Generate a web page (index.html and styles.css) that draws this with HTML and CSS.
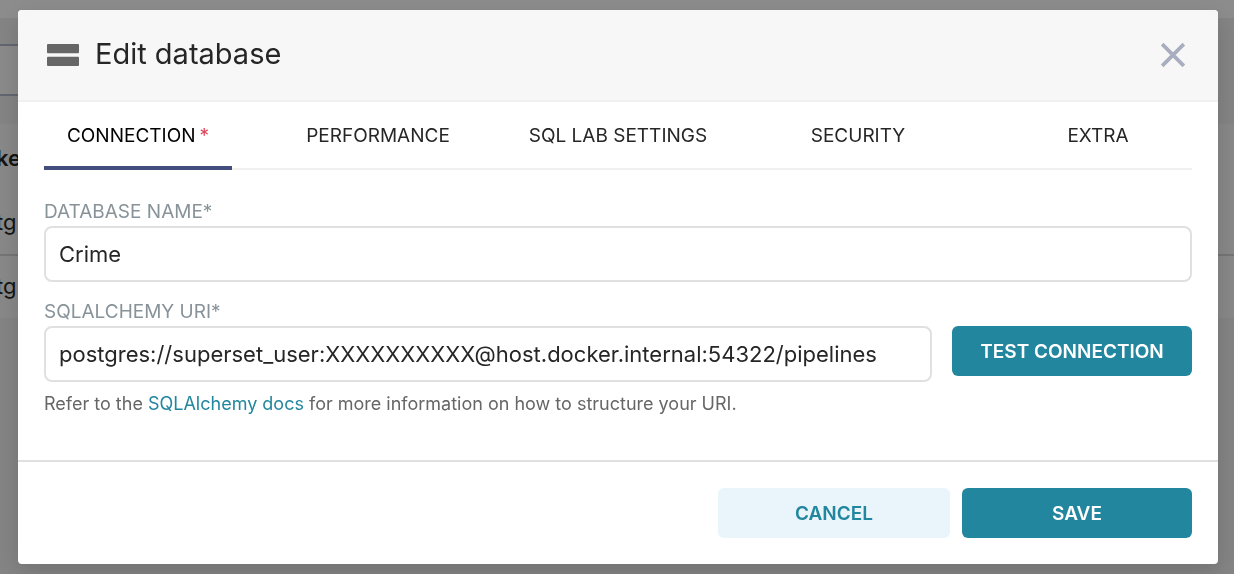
FILE: index.html
```html
<!DOCTYPE html>
<html lang="en">
<head>
<meta charset="utf-8">
<title>Edit database</title>
<link rel="stylesheet" href="styles.css">
</head>
<body>
<div class="page" aria-hidden="true">
  <div class="page-top"></div>
  <div class="filters"><div class="filter-box"></div></div>
  <div class="list">
    <div class="list-head">ke</div>
    <div class="list-row">tg</div>
    <div class="list-row">tg</div>
  </div>
</div>
<div class="overlay">
  <section class="modal" role="dialog" aria-modal="true" aria-labelledby="title">
    <header class="modal-header">
      <svg class="db-icon" viewBox="0 0 32 22" aria-hidden="true"><rect width="32" height="9.3" y="0" rx="1"/><rect width="32" height="9.3" y="12.7" rx="1"/></svg>
      <h1 class="title" id="title">Edit database</h1>
      <button class="close" type="button" aria-label="Close"><svg viewBox="0 0 24 24" aria-hidden="true"><path d="M2 2 22 22M22 2 2 22"/></svg></button>
    </header>
    <div class="modal-body">
      <nav class="tabs" role="tablist">
        <button class="tab tab-active" type="button" role="tab" aria-selected="true">CONNECTION<span class="required">*</span></button>
        <button class="tab" type="button" role="tab" aria-selected="false">PERFORMANCE</button>
        <button class="tab" type="button" role="tab" aria-selected="false">SQL LAB SETTINGS</button>
        <button class="tab" type="button" role="tab" aria-selected="false">SECURITY</button>
        <button class="tab" type="button" role="tab" aria-selected="false">EXTRA</button>
      </nav>
      <div class="field">
        <label class="label" for="name">DATABASE NAME*</label>
        <input class="input" id="name" type="text" value="Crime">
      </div>
      <div class="field">
        <label class="label" for="uri">SQLALCHEMY URI*</label>
        <div class="uri-row">
          <input class="input" id="uri" type="text" value="postgres://superset_user:XXXXXXXXXX@host.docker.internal:54322/pipelines">
          <button class="btn btn-primary btn-test" type="button">TEST CONNECTION</button>
        </div>
        <p class="help">Refer to the <a class="link" href="#docs">SQLAlchemy docs</a> for more information on how to structure your URI.</p>
      </div>
    </div>
    <footer class="modal-footer">
      <button class="btn btn-secondary" type="button">CANCEL</button>
      <button class="btn btn-primary" type="button">SAVE</button>
    </footer>
  </section>
</div>
</body>
</html>
```
FILE: styles.css
```css
* { box-sizing: border-box; }
body {
  margin: 0;
  min-height: 100vh;
  overflow: hidden;
  background: #f0f0f0;
  color: #262626;
  font-family: Inter, "Liberation Sans", sans-serif;
}
button, input { font: inherit; color: inherit; }

.page-top { height: 18px; background: #fff; }
.filters { padding: 26px 0 28px; }
.filter-box {
  width: 50%;
  height: 52px;
  border: solid #b4b9cc;
  border-width: 2px 0;
  background: #fbfbfb;
}
.list { background: #f7f7f7; font-size: 22px; text-indent: -4px; }
.list-head { padding-top: 2px; line-height: 64px; font-weight: 600; }
.list-row { line-height: 64px; }
.list-row + .list-row { padding-bottom: 2px; border-top: 2px solid #d5d5d5; line-height: 60px; }

.overlay {
  position: fixed;
  inset: 0;
  padding: 10px 16px 10px 18px;
  background: rgba(0, 0, 0, .45);
}
.modal {
  display: flex;
  flex-direction: column;
  min-height: 100%;
  overflow: hidden;
  border-radius: 4px;
  background: #fff;
  box-shadow: 0 8px 24px rgba(0, 0, 0, .15);
}
.modal-header {
  display: flex;
  align-items: center;
  gap: 16px;
  padding: 23px 32px 23px 29px;
  border-bottom: 2px solid #f0f0f0;
  background: #f7f7f7;
}
.db-icon { width: 32px; height: 22px; fill: #666; }
.title {
  margin: 0;
  padding-bottom: 2px;
  font-size: 29px;
  line-height: 42px;
  font-weight: 400;
}
.close {
  display: flex;
  margin-left: auto;
  padding: 0;
  border: 0;
  background: none;
}
.close svg { width: 26px; height: 26px; fill: none; stroke: #a8adbf; stroke-width: 3.4; }

.modal-body { flex: 1; padding: 0 26px; }
.tabs {
  display: grid;
  grid-template-columns: repeat(5, 1fr);
  gap: 52px;
  margin-bottom: 30px;
  box-shadow: inset 0 -2px #f0f0f0;
}
.tab {
  padding: 4px 0 0;
  border: 0;
  border-bottom: 4px solid transparent;
  background: none;
  font-size: 19px;
  line-height: 60px;
  white-space: nowrap;
}
.tab-active { border-color: #444e7c; color: #000; }
.required { margin-left: 4px; color: #e04355; }

.field { margin-bottom: 18px; }
.label { display: block; padding-bottom: 2px; color: #879399; font-size: 19px; line-height: 24px; }
.input {
  display: block;
  width: 100%;
  height: 56px;
  padding: 0 13px;
  border: 2px solid #e0e0e0;
  border-radius: 8px;
  background: #fff;
  font-size: 22px;
}
.uri-row { display: flex; align-items: flex-start; gap: 20px; }
.uri-row .input { flex: 1; min-width: 0; }
.help {
  margin: 8px 0 0;
  color: #666;
  font-size: 18px;
  line-height: 28px;
}
.link { color: #22869f; text-decoration: none; }

.btn {
  min-width: 230px;
  height: 50px;
  border: 0;
  border-radius: 6px;
  font-size: 19px;
  font-weight: 600;
}
.btn-primary { background: #22869f; color: #fff; }
.btn-secondary { min-width: 232px; background: #e9f5fa; color: #22869f; }
.btn-test { min-width: 240px; }
.modal-footer {
  display: flex;
  justify-content: flex-end;
  gap: 12px;
  padding: 26px;
  border-top: 2px solid #e0e0e0;
}
```
